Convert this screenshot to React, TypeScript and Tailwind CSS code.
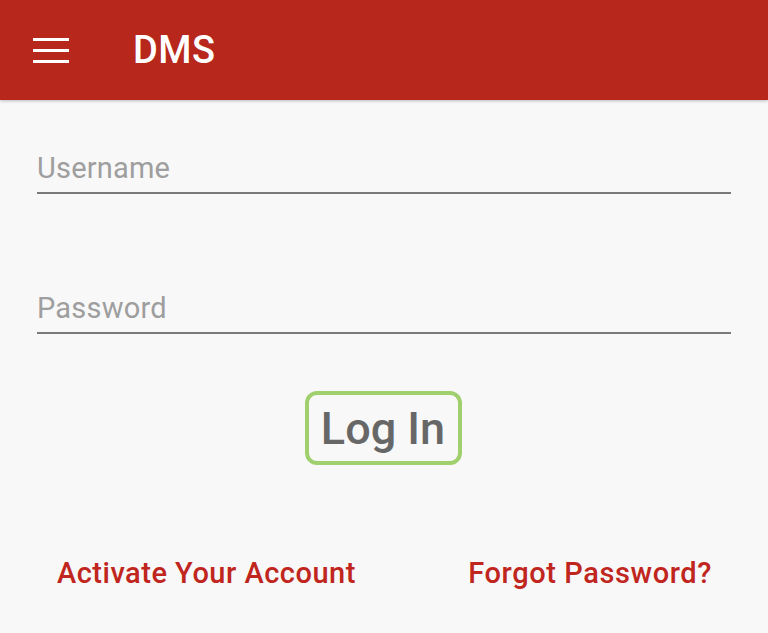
export default function App() {
  return (
    <div className="w-[768px] h-[633px] bg-[#f8f8f8] font-['Roboto',sans-serif] overflow-hidden">
      <header className="h-[100px] bg-[#b7271b] flex items-center shadow-[0_1px_3px_rgba(0,0,0,0.25)]">
        <div className="ml-[33px] w-[36px] flex flex-col gap-[8px]">
          <span className="block h-[3px] bg-white" />
          <span className="block h-[3px] bg-white" />
          <span className="block h-[3px] bg-white" />
        </div>
        <h1 className="ml-[64px] text-white text-[38px] font-medium tracking-[0.5px] leading-none">DMS</h1>
      </header>

      <main className="px-[37px] pt-[50px]">
        <div className="border-b-2 border-[#7a7a7a] pb-[6px]">
          <span className="text-[29px] text-[#9e9e9e] leading-[36px] tracking-[0.2px]">Username</span>
        </div>
        <div className="mt-[96px] border-b-2 border-[#7a7a7a] pb-[6px]">
          <span className="text-[29px] text-[#9e9e9e] leading-[36px] tracking-[0.2px]">Password</span>
        </div>

        <div className="flex justify-center mt-[57px] mr-[2px]">
          <button className="w-[157px] h-[74px] border-4 border-[#a0cf6e] rounded-[12px] text-[45px] font-medium text-[#676767] leading-none">
            Log In
          </button>
        </div>

        <div className="flex justify-between mt-[87px] pl-[20px] pr-[19px]">
          <a className="text-[29px] font-medium text-[#c0261d] tracking-[0.5px]">Activate Your Account</a>
          <a className="text-[29px] font-medium text-[#c0261d] tracking-[0.6px]">Forgot Password?</a>
        </div>
      </main>
    </div>
  );
}
